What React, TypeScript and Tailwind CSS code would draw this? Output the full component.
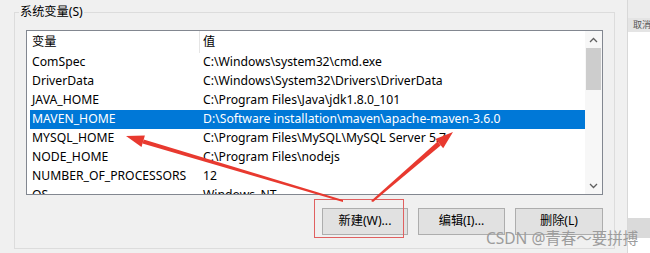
import React from 'react';

const rows: [string, string][] = [
  ['ComSpec', 'C:\\Windows\\system32\\cmd.exe'],
  ['DriverData', 'C:\\Windows\\System32\\Drivers\\DriverData'],
  ['JAVA_HOME', 'C:\\Program Files\\Java\\jdk1.8.0_101'],
  ['MAVEN_HOME', 'D:\\Software installation\\maven\\apache-maven-3.6.0'],
  ['MYSQL_HOME', 'C:\\Program Files\\MySQL\\MySQL Server 5.7'],
  ['NODE_HOME', 'C:\\Program Files\\nodejs'],
  ['NUMBER_OF_PROCESSORS', '12'],
  ['OS', 'Windows_NT'],
];

const font = { fontFamily: '"Noto Sans", "Noto Sans CJK SC", sans-serif' };

const WinButton: React.FC<{ label: string; w: string }> = ({ label, w }) => (
  <button className={`${w} h-[27px] bg-[#e1e1e1] border border-[#adadad] text-[12.2px] text-black flex items-center justify-center`}>
    {label}
  </button>
);

export default function App() {
  return (
    <div className="relative w-[650px] h-[253px] bg-[#f0f0f0] overflow-hidden flex" style={font}>
      {/* 对话框主体 */}
      <div className="w-[627px] pl-[14px] pt-[12px]">
        <div className="relative w-[601px] h-[237px] border border-[#dcdcdc] pt-[17px] pl-[11px] pr-[11px]">
          <span className="absolute -top-[9px] left-[4px] px-[1px] bg-[#f0f0f0] text-[12.2px] leading-[16px] text-black">
            系统变量(S)
          </span>

          {/* 列表 */}
          <div className="h-[165px] border border-[#828790] bg-white flex overflow-hidden">
            <div className="flex-1 flex flex-col text-[12.2px] text-black">
              <div className="h-[22px] ml-[3px] flex items-center shrink-0">
                <div className="w-[170px] pl-[2px] h-full flex items-center border-r border-[#e5e5e5]">变量</div>
                <div className="pl-[3px]">值</div>
              </div>
              {rows.map(([k, v], i) => {
                const sel = k === 'MAVEN_HOME';
                return (
                  <div
                    key={i}
                    className={`h-[19px] ml-[3px] flex items-center shrink-0 whitespace-nowrap ${sel ? 'bg-[#0078d7] text-white' : ''}`}
                  >
                    <div className="w-[173px] pl-[2px]">{k}</div>
                    <div>{v}</div>
                  </div>
                );
              })}
            </div>
            {/* 滚动条 */}
            <div className="w-[17px] bg-[#f7f7f7] flex flex-col">
              <div className="h-[17px] flex items-center justify-center">
                <svg width="9" height="6" viewBox="0 0 9 6">
                  <path d="M1 5 L4.5 1.5 L8 5" fill="none" stroke="#606060" strokeWidth="1.3" />
                </svg>
              </div>
              <div className="h-[42px] mx-[1px] bg-[#cdcdcd]" />
              <div className="flex-1" />
              <div className="h-[17px] flex items-center justify-center">
                <svg width="9" height="6" viewBox="0 0 9 6">
                  <path d="M1 1 L4.5 4.5 L8 1" fill="none" stroke="#606060" strokeWidth="1.3" />
                </svg>
              </div>
            </div>
          </div>

          {/* 按钮 */}
          <div className="mt-[13px] flex justify-end gap-[10px]">
            <WinButton label="新建(W)..." w="w-[86px]" />
            <WinButton label="编辑(I)..." w="w-[87px]" />
            <WinButton label="删除(L)" w="w-[88px]" />
          </div>
        </div>
      </div>

      {/* 右侧窗口边缘 */}
      <div className="w-[23px] flex flex-col border-l border-[#d8d8d8]">
        <div className="h-[18px] bg-[#ececec]" />
        <div className="h-[14px] bg-[#e4e4e4] text-[9px] leading-[14px] text-[#555] pl-[5px] overflow-hidden whitespace-nowrap">取消</div>
        <div className="flex-1 bg-white" />
        <div className="h-[20px] bg-[#dadada]" />
        <div className="h-[15px] bg-white" />
      </div>

      {/* 标注 */}
      <div className="absolute left-[314px] top-[199px] w-[90px] h-[39px] border border-[#e06060]" />
      <svg className="absolute left-0 top-0" width="650" height="253" viewBox="0 0 650 253">
        <polygon points="343,200 143.7,139.5 142.5,143.5 343,202" fill="#e8392f" />
        <polygon points="126,136 144.9,135.5 141.5,146.9" fill="#e8392f" />
        <polygon points="371,201 437.6,141.5 440.6,145.5 373,202" fill="#e8392f" />
        <polygon points="453,132 443.2,148.3 435.4,139.1" fill="#e8392f" />
      </svg>

      <div className="absolute left-[486px] top-[228px] text-[15.5px] leading-[20px] text-[#9c9c9c] whitespace-nowrap">
        CSDN @青春～要拼搏
      </div>
    </div>
  );
}
